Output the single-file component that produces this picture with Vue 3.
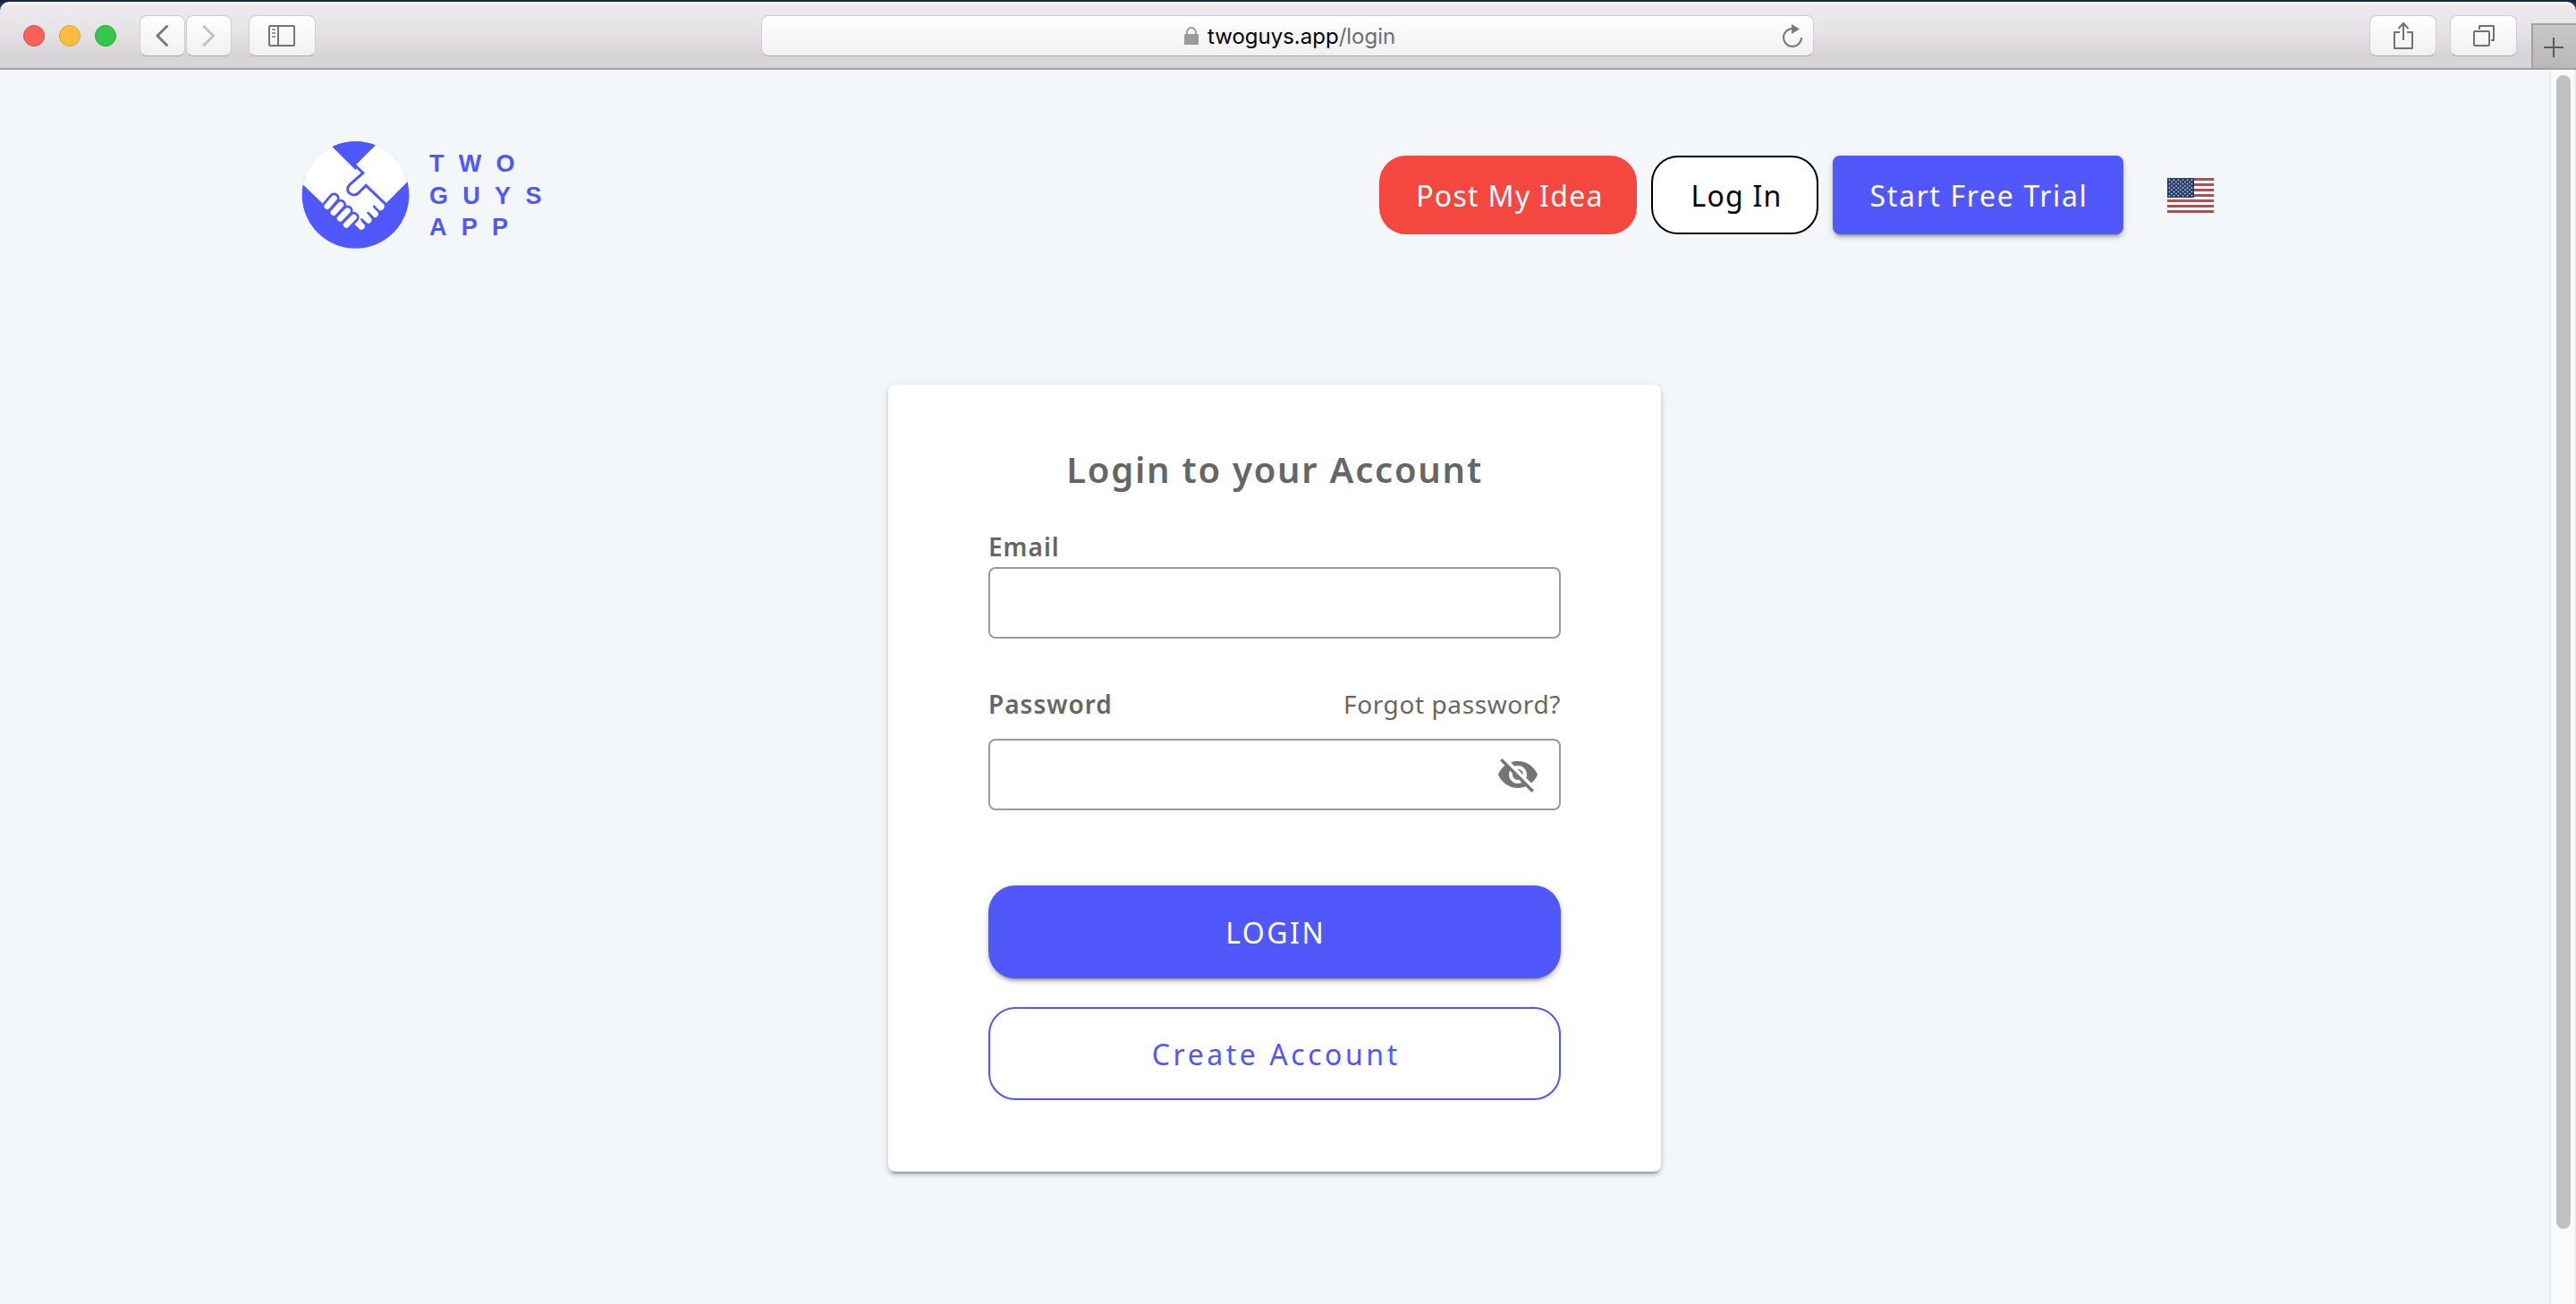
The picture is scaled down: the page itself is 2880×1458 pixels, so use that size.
<template>
  <div class="window">

    <!-- Browser toolbar -->
    <div class="toolbar">
      <div class="lights">
        <span v-for="c in lights" :key="c" class="light" :class="c" />
      </div>
      <div class="tb-nav">
        <button class="tb-btn nav-btn" aria-label="Back">
          <svg width="49" height="44" viewBox="0 0 49 44" fill="none" stroke="#7b7b7b" stroke-width="3" stroke-linecap="round" stroke-linejoin="round">
            <path d="M29.500 11.500L19 22l10.500 10.500" />
          </svg>
        </button>
        <button class="tb-btn nav-btn" aria-label="Forward">
          <svg width="49" height="44" viewBox="0 0 49 44" fill="none" stroke="#c3c3c3" stroke-width="3" stroke-linecap="round" stroke-linejoin="round">
            <path d="M19 11.500L29.500 22L19 32.500" />
          </svg>
        </button>
      </div>
      <button class="tb-btn side-btn" aria-label="Sidebar">
        <svg width="30" height="24" viewBox="0 0 30 24" fill="none" stroke="#747474" stroke-width="2">
          <rect x="1" y="1" width="28" height="22" rx="1" />
          <path d="M11 1v22" />
          <path d="M4 5h4M4 9h4M4 13h4" stroke="#9a9a9a" />
        </svg>
      </button>
      <div class="address">
        <svg class="lock" width="16" height="20" viewBox="0 0 16 20">
          <rect y="8" width="16" height="12" rx="1" fill="#9b9b9b" />
          <path d="M3 9V6.500a5 5.500 0 0 1 10 0V9" fill="none" stroke="#9b9b9b" stroke-width="2" />
        </svg>
        <span class="url">twoguys.app<span class="path">/login</span></span>
        <svg class="reload" width="24" height="28" viewBox="0 0 24 28">
          <path d="M12 6a10 10 0 1 0 10 10" fill="none" stroke="#7a7a7a" stroke-width="2" />
          <path d="M11 1l9 5.500-9 5.500z" fill="#7a7a7a" />
        </svg>
      </div>
      <div class="tb-right">
        <button class="tb-btn side-btn" aria-label="Share">
          <svg width="24" height="32" viewBox="0 0 24 32" fill="none" stroke="#727272" stroke-width="2">
            <path d="M8 12H2v18h20V12h-6" stroke-linejoin="round" />
            <path d="M12 21V2M6.500 8L12 2l5.500 6" />
          </svg>
        </button>
        <button class="tb-btn side-btn" aria-label="Tabs">
          <svg width="26" height="26" viewBox="0 0 26 26" fill="none" stroke="#727272" stroke-width="2">
            <rect x="2" y="8" width="17" height="16" rx="1" />
            <path d="M8 6V2h16v16h-3" stroke-linejoin="round" />
          </svg>
        </button>
      </div>
      <button class="new-tab" aria-label="New tab">
        <svg width="22" height="22" viewBox="0 0 22 22" stroke="#5c5a5c" stroke-width="2">
          <path d="M0 11h22M11 0v22" />
        </svg>
      </button>
    </div>

    <!-- Page -->
    <div class="viewport">
      <div class="page">
        <header class="header">
          <div class="brand">
            <svg width="121" height="120" viewBox="51 53 362 360">
              <defs>
                <clipPath id="disc"><circle cx="232" cy="233" r="180" /></clipPath>
              </defs>
              <circle cx="232" cy="233" r="179.500" fill="#5058fc" />
              <g clip-path="url(#disc)">
                <!-- arms -->
                <path d="M155 72L229 143L232 133L298 67L430 20V165L333 262L315 285L240 330L121 261L40 183V40z" fill="#fff" />
                <path d="M153 70L232 149L300 65L232 40z" fill="#5058fc" />
                <path d="M300 65L232 133L262 163L340 180z" fill="#fff" />
                <!-- fingers of the left hand -->
                <g stroke="#fff" stroke-width="22" stroke-linecap="round">
                  <path d="M270 226L317 273M250 250L297 297M230 272L275 317M215 303L252 338" />
                </g>
                <path d="M294 272L310 288M274 293L290 309M252 315L268 331" stroke="#5058fc" stroke-width="8" stroke-linecap="round" />
                <!-- thumb -->
                <path d="M229 132L257 159L212 199C203 209 203 220 212 227C221 235 233 234 241 227L267 201L334 265" fill="none" stroke="#5058fc" stroke-width="9" />
                <!-- fingers of the right hand -->
                <path v-for="(f, i) in fingers" :key="i" :d="f" stroke="#5058fc" stroke-width="37" stroke-linecap="round" />
                <path v-for="(f, i) in fingers" :key="'w' + i" :d="f" stroke="#fff" stroke-width="20" stroke-linecap="round" />
              </g>
            </svg>
            <div class="wordmark">
              <span>TWO</span>
              <span>GUYS</span>
              <span>APP</span>
            </div>
          </div>
          <nav class="actions">
            <a class="btn btn-idea">Post My Idea</a>
            <a class="btn btn-log">Log In</a>
            <a class="btn btn-trial">Start Free Trial</a>
            <svg class="flag" width="52" height="39" viewBox="0 0 52 39">
              <rect width="52" height="39" fill="#fff" />
              <rect v-for="n in 7" :key="n" :y="(n - 1) * 6" width="52" height="3" fill="#c5444f" />
              <rect width="30" height="22" fill="#263c6b" />
              <circle v-for="(s, i) in stars" :key="'s' + i" :cx="s.x" :cy="s.y" r="0.9" fill="#c3cad8" />
            </svg>
          </nav>
        </header>

        <form class="card" @submit.prevent>
          <h1 class="title">Login to your Account</h1>
          <label class="label" for="email">Email</label>
          <input id="email" v-model="email" class="field" type="text" />
          <div class="label-row">
            <label class="label" for="password">Password</label>
            <a class="forgot">Forgot password?</a>
          </div>
          <div class="field-wrap">
            <input id="password" v-model="password" class="field" :type="visible ? 'text' : 'password'" />
            <svg class="eye" width="48" height="48" viewBox="0 0 24 24" fill="#757575" @click="visible = !visible">
              <path d="M12 7c2.760 0 5 2.240 5 5 0 .65-.13 1.260-.36 1.830l2.920 2.920c1.510-1.260 2.700-2.890 3.430-4.750-1.730-4.390-6-7.500-11-7.500-1.400 0-2.740.25-3.980.7l2.160 2.160C10.740 7.130 11.350 7 12 7zM2 4.270l2.280 2.280.46.46C3.080 8.300 1.780 10.020 1 12c1.730 4.390 6 7.500 11 7.500 1.550 0 3.030-.3 4.380-.84l.42.42L19.730 22 21 20.730 3.270 3 2 4.270zM7.530 9.800l1.550 1.550c-.05.21-.08.43-.08.65 0 1.660 1.340 3 3 3 .22 0 .44-.03.65-.08l1.550 1.550c-.67.33-1.410.53-2.200.53-2.760 0-5-2.240-5-5 0-.79.2-1.530.53-2.200zm4.310-.78l3.150 3.150.02-.16c0-1.660-1.340-3-3-3l-.17.010z" />
            </svg>
          </div>
          <button class="submit">LOGIN</button>
          <button class="create" type="button">Create Account</button>
        </form>
      </div>
      <div class="scrollbar">
        <div class="thumb" />
      </div>
    </div>

  </div>
</template>

<script setup>
import { ref } from 'vue'

const email = ref('')
const password = ref('')
const visible = ref(false)

const lights = ['red', 'yellow', 'green']

const fingers = [
  'M160 244L137 271',
  'M182 266L158 292',
  'M205 286L180 312',
  'M226 308L201 333',
]

// staggered star rows, 6 and 5 alternately
const stars = []
for (let r = 0; r < 9; r++) {
  const count = r % 2 ? 5 : 6
  for (let c = 0; c < count; c++) {
    stars.push({ x: 2.5 + (r % 2 ? 2.5 : 0) + c * 5, y: 2.2 + r * 2.2 })
  }
}
</script>

<style>
body {
  margin: 0;
  background: #1f2e4a;
}
</style>

<style scoped>
* {
  box-sizing: border-box;
}

.window {
  height: 1458px;
  padding-top: 2px;
  display: flex;
  flex-direction: column;
  overflow: hidden;
  background: linear-gradient(#17243b, #2c4a75 12px);
  font-family: "Noto Sans", "Open Sans", sans-serif;
}

button {
  font-family: inherit;
  padding: 0;
  cursor: pointer;
}

/* ── Toolbar ── */
.toolbar {
  height: 76px;
  flex-shrink: 0;
  display: flex;
  align-items: flex-start;
  padding: 15px 0 0 26px;
  border-radius: 10px 10px 0 0;
  border-bottom: 2px solid #a0a0a2;
  background: linear-gradient(#fafafa 0, #edebee 3px, #e6e4e7 30px, #d6d5d6 60px, #d7d4d8 74px);
}

.lights {
  display: flex;
  gap: 16px;
  margin-top: 11px;
}

.light {
  width: 24px;
  height: 24px;
  border-radius: 50%;
  border: 1px solid;
}

.light.red {
  background: #fc605c;
  border-color: #de4744;
}

.light.yellow {
  background: #fdbc40;
  border-color: #de9f34;
}

.light.green {
  background: #34c84a;
  border-color: #27a935;
}

.tb-nav {
  display: flex;
  gap: 1px;
  margin-left: 26px;
}

.tb-btn {
  height: 46px;
  border: 1px solid #cfcdcf;
  border-bottom-color: #a9a8aa;
  border-radius: 8px;
  background: linear-gradient(#fff, #f0f0f0);
  display: flex;
  align-items: center;
  justify-content: center;
}

.nav-btn {
  width: 51px;
}

.side-btn {
  width: 75px;
}

.tb-nav + .side-btn {
  margin-left: 19px;
  padding-right: 1px;
}

.address {
  position: relative;
  width: 1177px;
  height: 46px;
  margin-left: 498px;
  display: flex;
  align-items: center;
  padding-left: 472px;
  border: 1px solid #cfcdcf;
  border-bottom-color: #a9a8aa;
  border-radius: 8px;
  background: linear-gradient(#fff, #f0f0f0);
}

.url {
  margin: 2px 0 0 10px;
  font-family: Inter, Roboto, sans-serif;
  font-size: 24px;
  line-height: 30px;
  font-weight: 400;
  letter-spacing: 0;
  color: #000;
}

.url .path {
  color: #6e6e6e;
}

.reload {
  position: absolute;
  right: 11px;
  top: 8px;
}

.tb-right {
  display: flex;
  gap: 15px;
  margin-left: 621px;
}

.new-tab {
  width: 50px;
  height: 50px;
  margin: 9px 0 0 auto;
  border: 0;
  border-left: 2px solid #a19fa2;
  border-top: 2px solid #a6a4a7;
  background: linear-gradient(#c8c6c9, #bab7bb);
  display: flex;
  align-items: center;
  justify-content: center;
  padding: 2px 2px 0 0;
}

/* ── Page ── */
.viewport {
  flex: 1;
  display: flex;
  background: #f3f7fa;
}

.page {
  flex: 1;
}

.scrollbar {
  width: 30px;
  padding: 6px 0 0 6px;
  background: #fafafa;
  border-left: 2px solid #e8e8e8;
  border-right: 2px solid #ededed;
}

.thumb {
  width: 16px;
  height: 1290px;
  border-radius: 8px;
  background: #c1c1c1;
}

/* ── Header ── */
.header {
  height: 280px;
  padding: 0 375px 0 337px;
  display: flex;
  align-items: center;
  justify-content: space-between;
}

.brand {
  display: flex;
  align-items: center;
}

.wordmark {
  display: flex;
  flex-direction: column;
  margin: 3px 0 0 22px;
  font-family: "Liberation Sans", sans-serif;
  font-weight: 700;
  font-size: 27px;
  line-height: 35.500px;
  letter-spacing: 16.300px;
  color: #5058fc;
}

.actions {
  display: flex;
  align-items: center;
}

.btn {
  height: 88px;
  display: flex;
  align-items: center;
  justify-content: center;
  font-size: 32px;
  white-space: nowrap;
}

.btn-idea {
  width: 288px;
  border-radius: 30px;
  background: #f3473f;
  color: #fff;
  letter-spacing: 1.300px;
  padding-left: 4px;
}

.btn-log {
  width: 187px;
  margin-left: 16px;
  border: 2px solid #000;
  border-radius: 30px;
  background: #fff;
  color: #000;
  letter-spacing: 1.200px;
  padding-left: 4px;
}

.btn-trial {
  width: 325px;
  margin-left: 16px;
  border-radius: 8px;
  background: #5058fc;
  color: #fff;
  letter-spacing: 1.650px;
  padding-left: 2px;
  box-shadow: 0 6px 2px -4px rgba(0, 0, 0, .2), 0 4px 4px rgba(0, 0, 0, .14), 0 2px 10px rgba(0, 0, 0, .12);
}

.flag {
  margin-left: 49px;
}

/* ── Login card ── */
.card {
  width: 864px;
  height: 880px;
  margin: 72px auto 0;
  padding: 67px 112px 0;
  display: flex;
  flex-direction: column;
  border-radius: 8px;
  background: #fff;
  color: #666;
  box-shadow: 0 6px 2px -4px rgba(0, 0, 0, .2), 0 4px 4px rgba(0, 0, 0, .14), 0 2px 10px rgba(0, 0, 0, .12);
}

.title {
  margin: 0 0 39px;
  font-size: 40px;
  line-height: 56px;
  font-weight: 600;
  letter-spacing: 1.750px;
  text-align: center;
  white-space: nowrap;
}

.label {
  font-size: 28px;
  line-height: 38px;
  font-weight: 600;
  letter-spacing: 1px;
  margin-bottom: 4px;
}

.field {
  width: 100%;
  height: 80px;
  border: 2px solid #9b9b9b;
  border-radius: 8px;
  background: #fff;
  padding: 0 20px;
  font-size: 28px;
  outline: none;
}

.label-row {
  display: flex;
  justify-content: space-between;
  margin: 54px 0 20px;
}

.label-row .label {
  margin: 0;
}

.forgot {
  font-size: 28px;
  line-height: 38px;
  letter-spacing: 0.600px;
}

.field-wrap {
  position: relative;
  height: 80px;
}

.eye {
  position: absolute;
  right: 24px;
  top: 16px;
}

.submit,
.create {
  height: 104px;
  flex-shrink: 0;
  border-radius: 30px;
  font-size: 32px;
}

.submit {
  margin-top: 84px;
  border: 0;
  background: #5058fc;
  color: #fff;
  letter-spacing: 2.500px;
  text-indent: 2.500px;
  box-shadow: 0 6px 2px -4px rgba(0, 0, 0, .2), 0 4px 4px rgba(0, 0, 0, .14), 0 2px 10px rgba(0, 0, 0, .12);
}

.create {
  margin-top: 32px;
  border: 2px solid #5058fc;
  background: #fff;
  color: #5058fc;
  letter-spacing: 3.550px;
  text-indent: 3.550px;
}
</style>
